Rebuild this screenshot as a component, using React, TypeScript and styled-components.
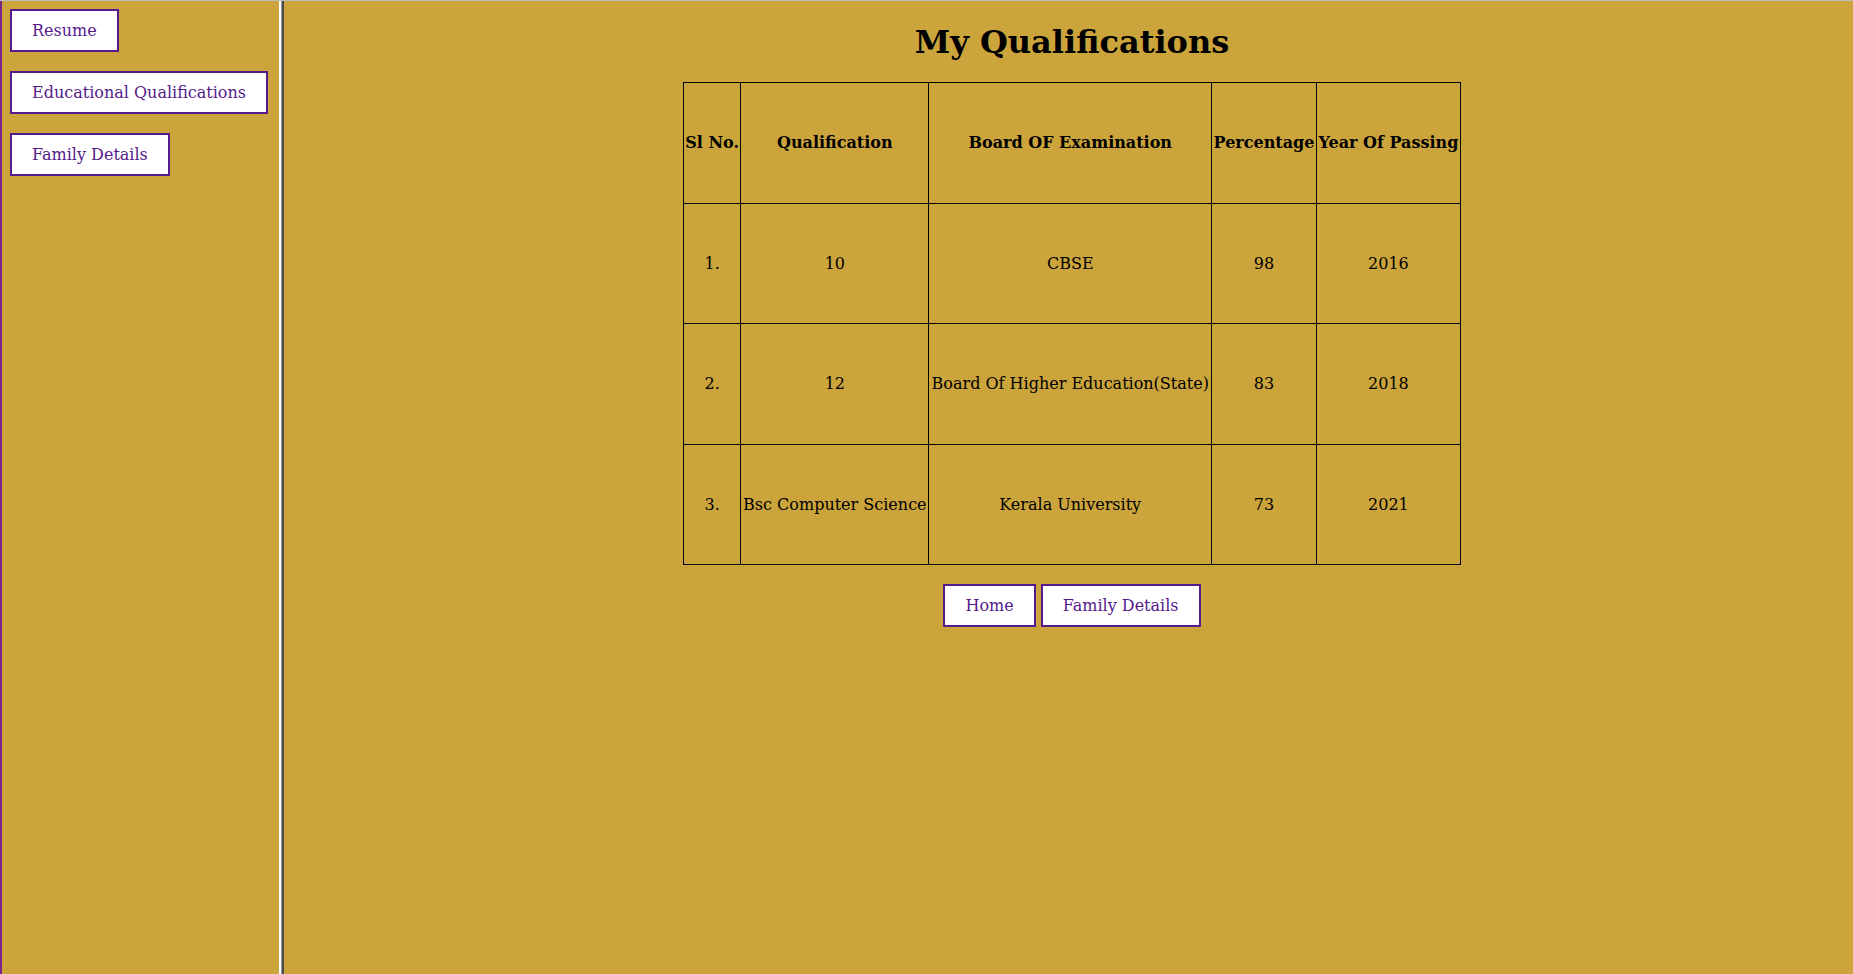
import styled, { createGlobalStyle } from "styled-components"

const GlobalStyle = createGlobalStyle`
  html, body {
    margin: 0;
    padding: 0;
  }
  body {
    font-family: "DejaVu Serif", "Liberation Serif", serif;
    font-size: 16px;
    background-color: #cba43c;
  }
`

const Page = styled.div`
  display: flex;
  height: 974px;
  border-top: 1px solid #bdbdbd;
  box-sizing: border-box;
  background-color: #cba43c;
`

const SideFrame = styled.nav`
  width: 279px;
  flex-shrink: 0;
  border-left: 2px solid #7a2388;
  padding: 8px;
  box-sizing: border-box;
  display: flex;
  flex-direction: column;
  align-items: flex-start;
  gap: 19px;
`

const Divider = styled.div`
  width: 6px;
  flex-shrink: 0;
  display: flex;
`

const DividerStripe = styled.div<{ $color: string; $w: number }>`
  width: ${(p) => p.$w}px;
  background-color: ${(p) => p.$color};
`

const MainFrame = styled.main`
  flex: 1;
  display: flex;
  flex-direction: column;
  align-items: center;
  padding: 0 5px 0 11px;
`

const Title = styled.h1`
  font-size: 32px;
  font-weight: bold;
  margin: 23px 0 21px;
  line-height: 37px;
`

const Table = styled.table`
  border-collapse: collapse;
  border: 1px solid black;
  width: 778px;
`

const HeadCell = styled.th`
  border: 1px solid black;
  padding: 1px;
  height: 117.5px;
  font-weight: bold;
  text-align: center;
  white-space: nowrap;
`

const Cell = styled.td`
  border: 1px solid black;
  padding: 1px;
  height: 117.5px;
  text-align: center;
  white-space: nowrap;
`

const LinkButton = styled.a`
  display: inline-block;
  background-color: white;
  color: #551a8b;
  border: 2px solid #551a8b;
  padding: 10px 20px;
  line-height: 19px;
  text-decoration: none;
  cursor: pointer;
`

const BottomNav = styled.div`
  display: flex;
  gap: 5px;
  margin-top: 19px;
`

const rows = [
  { sl: "1.", qual: "10", board: "CBSE", pct: "98", year: "2016" },
  { sl: "2.", qual: "12", board: "Board Of Higher Education(State)", pct: "83", year: "2018" },
  { sl: "3.", qual: "Bsc Computer Science", board: "Kerala University", pct: "73", year: "2021" },
]

export default function App() {
  return (
    <>
      <GlobalStyle />
      <Page>
        <SideFrame>
          <LinkButton>Resume</LinkButton>
          <LinkButton>Educational Qualifications</LinkButton>
          <LinkButton>Family Details</LinkButton>
        </SideFrame>
        <Divider>
          <DividerStripe $color="#ffffff" $w={2} />
          <DividerStripe $color="#9a9a9a" $w={1} />
          <DividerStripe $color="#4b4b4b" $w={2} />
          <DividerStripe $color="#cba43c" $w={1} />
        </Divider>
        <MainFrame>
          <Title>My Qualifications</Title>
          <Table>
            <thead>
              <tr>
                <HeadCell>Sl No.</HeadCell>
                <HeadCell>Qualification</HeadCell>
                <HeadCell>Board OF Examination</HeadCell>
                <HeadCell>Percentage</HeadCell>
                <HeadCell>Year Of Passing</HeadCell>
              </tr>
            </thead>
            <tbody>
              {rows.map((r) => (
                <tr key={r.sl}>
                  <Cell>{r.sl}</Cell>
                  <Cell>{r.qual}</Cell>
                  <Cell>{r.board}</Cell>
                  <Cell>{r.pct}</Cell>
                  <Cell>{r.year}</Cell>
                </tr>
              ))}
            </tbody>
          </Table>
          <BottomNav>
            <LinkButton>Home</LinkButton>
            <LinkButton>Family Details</LinkButton>
          </BottomNav>
        </MainFrame>
      </Page>
    </>
  )
}
